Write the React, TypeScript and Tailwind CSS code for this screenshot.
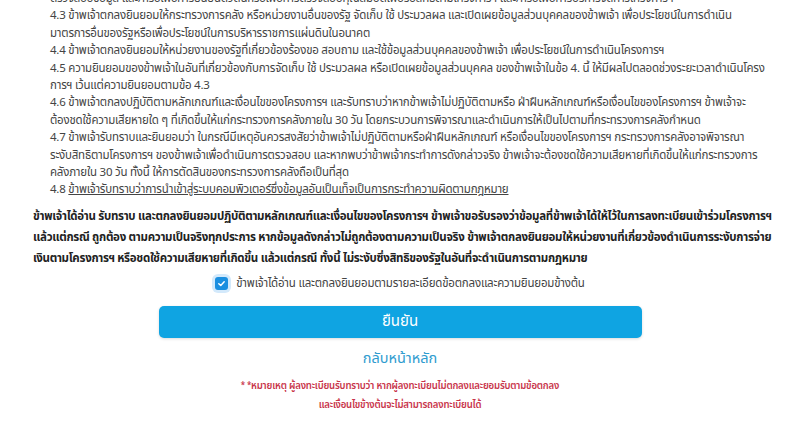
import React from "react";

const items: React.ReactNode[] = [
  "ตรวจสอบข้อมูล และ/หรือเพื่อการยืนยันตัวตนหรือเพื่อการตรวจสอบคุณสมบัติเพื่อรับสิทธิตามโครงการฯ และ/หรือเพื่อการบริหารจัดการโครงการฯ",
  "4.3 ข้าพเจ้าตกลงยินยอมให้กระทรวงการคลัง หรือหน่วยงานอื่นของรัฐ จัดเก็บ ใช้ ประมวลผล และเปิดเผยข้อมูลส่วนบุคคลของข้าพเจ้า เพื่อประโยชน์ในการดำเนิน",
  "มาตรการอื่นของรัฐหรือเพื่อประโยชน์ในการบริหารราชการแผ่นดินในอนาคต",
  "4.4 ข้าพเจ้าตกลงยินยอมให้หน่วยงานของรัฐที่เกี่ยวข้องร้องขอ สอบถาม และใช้ข้อมูลส่วนบุคคลของข้าพเจ้า เพื่อประโยชน์ในการดำเนินโครงการฯ",
  "4.5 ความยินยอมของข้าพเจ้าในอันที่เกี่ยวข้องกับการจัดเก็บ ใช้ ประมวลผล หรือเปิดเผยข้อมูลส่วนบุคคล ของข้าพเจ้าในข้อ 4. นี้ ให้มีผลไปตลอดช่วงระยะเวลาดำเนินโครง",
  "การฯ เว้นแต่ความยินยอมตามข้อ 4.3",
  "4.6 ข้าพเจ้าตกลงปฏิบัติตามหลักเกณฑ์และเงื่อนไขของโครงการฯ และรับทราบว่าหากข้าพเจ้าไม่ปฏิบัติตามหรือ ฝ่าฝืนหลักเกณฑ์หรือเงื่อนไขของโครงการฯ ข้าพเจ้าจะ",
  "ต้องชดใช้ความเสียหายใด ๆ ที่เกิดขึ้นให้แก่กระทรวงการคลังภายใน 30 วัน โดยกระบวนการพิจารณาและดำเนินการให้เป็นไปตามที่กระทรวงการคลังกำหนด",
  "4.7 ข้าพเจ้ารับทราบและยินยอมว่า ในกรณีมีเหตุอันควรสงสัยว่าข้าพเจ้าไม่ปฏิบัติตามหรือฝ่าฝืนหลักเกณฑ์ หรือเงื่อนไขของโครงการฯ กระทรวงการคลังอาจพิจารณา",
  "ระงับสิทธิตามโครงการฯ ของข้าพเจ้าเพื่อดำเนินการตรวจสอบ และหากพบว่าข้าพเจ้ากระทำการดังกล่าวจริง ข้าพเจ้าจะต้องชดใช้ความเสียหายที่เกิดขึ้นให้แก่กระทรวงการ",
  "คลังภายใน 30 วัน ทั้งนี้ ให้การตัดสินของกระทรวงการคลังถือเป็นที่สุด",
];

const bold = [
  "ข้าพเจ้าได้อ่าน รับทราบ และตกลงยินยอมปฏิบัติตามหลักเกณฑ์และเงื่อนไขของโครงการฯ ข้าพเจ้าขอรับรองว่าข้อมูลที่ข้าพเจ้าได้ให้ไว้ในการลงทะเบียนเข้าร่วมโครงการฯ",
  "แล้วแต่กรณี ถูกต้อง ตามความเป็นจริงทุกประการ หากข้อมูลดังกล่าวไม่ถูกต้องตามความเป็นจริง ข้าพเจ้าตกลงยินยอมให้หน่วยงานที่เกี่ยวข้องดำเนินการระงับการจ่าย",
  "เงินตามโครงการฯ หรือชดใช้ความเสียหายที่เกิดขึ้น แล้วแต่กรณี ทั้งนี้ ไม่ระงับซึ่งสิทธิของรัฐในอันที่จะดำเนินการตามกฎหมาย",
];

export default function App() {
  return (
    <div
      className="w-[800px] h-[438px] overflow-hidden bg-white"
      style={{ fontFamily: '"Noto Sans Thai", "Noto Sans", "DejaVu Sans", sans-serif' }}
    >
      <div className="px-[33px] -mt-[10px]">
        <div className="pl-[17px] text-[11.5px] tracking-[-0.22px] leading-[17.4px] text-[#444]">
          {items.map((t, i) => (
            <div key={i} className="whitespace-nowrap">
              {t}
            </div>
          ))}
          <div className="whitespace-nowrap">
            4.8 <span className="underline">ข้าพเจ้ารับทราบว่าการนำเข้าสู่ระบบคอมพิวเตอร์ซึ่งข้อมูลอันเป็นเท็จเป็นการกระทำความผิดตามกฎหมาย</span>
          </div>
        </div>
        <div className="mt-[7px] text-[11.5px] tracking-[-0.3px] leading-[21px] font-bold text-[#222]">
          {bold.map((t, i) => (
            <div key={i} className="whitespace-nowrap">
              {t}
            </div>
          ))}
        </div>
      </div>
      <div className="mt-[5px] flex items-center justify-center gap-[6px] h-[20px]">
        <span className="flex h-[13px] w-[13px] items-center justify-center rounded-[3px] bg-[#1b8fe0] ring-[3px] ring-[#d3e9fb]">
          <svg width="9" height="9" viewBox="0 0 10 10" fill="none">
            <path d="M2 5.2 L4.2 7.2 L8 3" stroke="white" strokeWidth="1.6" strokeLinecap="round" strokeLinejoin="round" />
          </svg>
        </span>
        <span className="text-[11.5px] tracking-[-0.2px] text-[#444] ml-[2px]">
          ข้าพเจ้าได้อ่าน และตกลงยินยอมตามรายละเอียดข้อตกลงและความยินยอมข้างต้น
        </span>
      </div>
      <div className="mt-[12px] flex justify-center">
        <button className="w-[483px] h-[32px] rounded-[5px] bg-[#0fa4e2] text-white text-[15px] shadow-[0_1px_3px_rgba(0,0,0,0.15)]">
          ยืนยัน
        </button>
      </div>
      <div className="mt-[9px] text-center text-[14.5px] leading-[24px] text-[#2f9ccf]">กลับหน้าหลัก</div>
      <div className="mt-[6px] text-center text-[9.6px] tracking-[-0.2px] leading-[19px] font-semibold text-[#c8344a]">
        <div>
          <span className="text-[8px] align-top">* *</span>หมายเหตุ ผู้ลงทะเบียนรับทราบว่า หากผู้ลงทะเบียนไม่ตกลงและยอมรับตามข้อตกลง
        </div>
        <div>และเงื่อนไขข้างต้นจะไม่สามารถลงทะเบียนได้</div>
      </div>
    </div>
  );
}
